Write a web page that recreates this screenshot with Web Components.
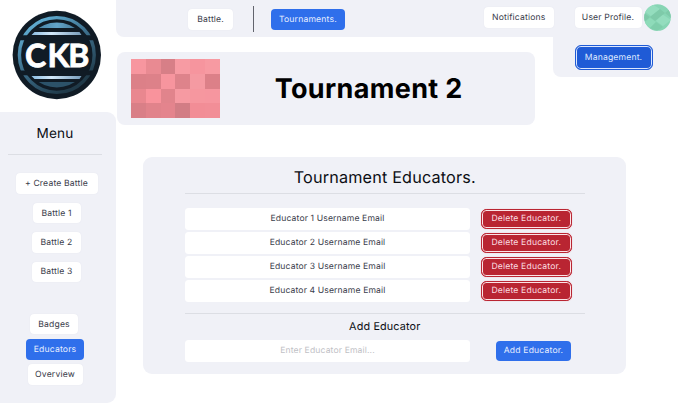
<!DOCTYPE html>
<html lang="en">
<head>
<meta charset="utf-8">
<title>Tournament Educators</title>
<style>
body{margin:0;background:#fff;font-family:Inter,"Liberation Sans",sans-serif;overflow:hidden;text-rendering:geometricPrecision}
</style>
</head>
<body>
<ckb-app></ckb-app>
<script>
class Base extends HTMLElement {
  constructor(){ super(); this.attachShadow({mode:'open'}); }
  connectedCallback(){ this.shadowRoot.innerHTML = this.render(); }
}

class CkbButton extends Base {
  render(){
    return `<style>
      :host{display:block;box-sizing:border-box;flex:none;width:var(--w,60px);height:var(--h,20.5px)}
      .b{box-sizing:border-box;width:100%;height:100%;padding-top:var(--pt,1px);border-radius:4px;display:flex;align-items:center;justify-content:center;
        background:#fff;color:#3a3d4b;font-size:8.6px;line-height:12px;letter-spacing:.17px;white-space:nowrap;box-shadow:0 0 1px #dcdee8}
      :host([kind=primary]) .b{background:#2f6feb;color:#e6eeff;box-shadow:none}
      :host([kind=focus]) .b{background:#1f5bd6;color:#dfe9ff;border:1.5px solid #1f5bd6;border-radius:6px;box-shadow:inset 0 0 0 1px #dce7ff}
      :host([kind=danger]) .b{background:#b92532;color:#fbdde0;border:1.3px solid #b92532;border-radius:5.5px;box-shadow:inset 0 0 0 1px #fbe3e6,0 0 1px #e99aa2}
    </style><div class="b"><span><slot></slot></span></div>`;
  }
}
customElements.define('ckb-button', CkbButton);

class CkbLogo extends Base {
  render(){
    return `<style>:host{display:block;width:116px;height:112px}svg{display:block}</style>
    <svg width="116" height="112" viewBox="0 0 116 112">
      <defs>
        <linearGradient id="r" x1="0" y1="0" x2=".6" y2="1"><stop offset="0" stop-color="#6cc2ea"/><stop offset=".5" stop-color="#3f7391"/><stop offset="1" stop-color="#203a49"/></linearGradient>
        <linearGradient id="t" x1="0" y1="0" x2="1" y2="0"><stop offset="0" stop-color="#356c8d"/><stop offset=".5" stop-color="#63a5ca"/><stop offset="1" stop-color="#305a75"/></linearGradient>
        <linearGradient id="l" x1="0" y1="0" x2="1" y2="0"><stop offset="0" stop-color="#8abbe0"/><stop offset=".4" stop-color="#d3e9fa"/><stop offset="1" stop-color="#779cba"/></linearGradient>
        <clipPath id="c"><circle cx="56.8" cy="55" r="32.5"/></clipPath>
      </defs>
      <circle cx="56.8" cy="55" r="44.2" fill="#101b25"/>
      <circle cx="56.8" cy="55" r="37.4" fill="none" stroke="url(#r)" stroke-width="3.4"/>
      <g clip-path="url(#c)">
        <path d="M24 22h66v6H24z" fill="url(#t)"/>
        <path d="M24 82h66v8H24z" fill="#2c5269"/>
      </g>
      <path d="M20 35.3h74v5H17zM17 70.5h79L94 75.3H20z" fill="#101b25"/>
      <path d="M34.5 32h45l2 3h-50zM31.5 76h50l-2 3h-45z" fill="url(#l)"/>
      <text x="25 47.4 68.3" y="67.4" font-family="Lato,sans-serif" font-weight="700" font-size="32" fill="#fff" stroke="#fff" stroke-width=".8">CKB</text>
    </svg>`;
  }
}
customElements.define('ckb-logo', CkbLogo);

class CkbAvatar extends Base {
  render(){
    return `<style>:host{display:block;flex:none;width:27px;height:27px}svg{display:block}</style>
    <svg width="27" height="27" viewBox="0 0 27 27"><defs><clipPath id="a"><circle cx="13.5" cy="13.5" r="13.3"/></clipPath></defs>
    <g clip-path="url(#a)"><path fill="#87d5b4" d="M0 0h27v27H0z"/>
      <path fill="#94ddbe" d="M8 0l8 5-9 7-7-5zM18 10l9 6-8 6-7-5z"/>
      <path fill="#7ecaa9" d="M16 5l5 4-10 8-5-4zM0 9l6 4-6 5zM21 9l6-5v10z"/>
      <path fill="#8edbb9" d="M6 14l6 4-6 6-6-5z"/><path fill="#7fceab" d="M12 18l7 5-6 4-7-3z"/></g></svg>`;
  }
}
customElements.define('ckb-avatar', CkbAvatar);

class CkbMosaic extends Base {
  render(){
    const cells = ['f7969f','e98a92','d77f87','f79ba3','f6959e','f79aa2',
                   'dc8088','dd8189','f7959e','de838b','f59aa2','dc8088',
                   'e9878f','f9939c','e1848c','f69aa2','f6979f','f6969f',
                   'd97f87','e1838b','e4848d','d27d85','f28d96','f28e97'];
    return `<style>:host{display:grid;flex:none;width:88.7px;height:59px;grid-template:repeat(4,1fr)/repeat(6,1fr);background:#ec8c95}</style>`
      + cells.map(c=>`<i style="background:#${c}"></i>`).join('');
  }
}
customElements.define('ckb-mosaic', CkbMosaic);

class CkbSidebar extends Base {
  render(){
    return `<style>
      :host{display:flex;flex-direction:column;align-items:center;box-sizing:border-box;width:116px;height:291px;padding:12px 6px 0 0;background:#f0f1f7;border-radius:0 9px 9px 0}
      h2{margin:0;font-size:13.6px;line-height:20px;font-weight:400;letter-spacing:.2px;color:#0c0e14}
      hr{width:94px;height:1px;margin:10px 0 18px;border:0;background:#dcdee4}
      .g{display:flex;flex-direction:column;align-items:center;gap:8.9px;padding-left:3px}
      .v{gap:4.6px;margin-top:31.8px;padding:0}
      .v ckb-button:first-child{margin-right:2px}
    </style>
    <h2>Menu</h2><hr>
    <div class="g">
      <ckb-button style="--w:82px;--h:21px">+ Create Battle</ckb-button>
      <ckb-button style="--w:48px">Battle 1</ckb-button>
      <ckb-button style="--w:49px">Battle 2</ckb-button>
      <ckb-button style="--w:49px">Battle 3</ckb-button>
    </div>
    <div class="g v">
      <ckb-button style="--w:48px">Badges</ckb-button>
      <ckb-button kind="primary" style="--w:58px">Educators</ckb-button>
      <ckb-button style="--w:55px">Overview</ckb-button>
    </div>`;
  }
}
customElements.define('ckb-sidebar', CkbSidebar);

class CkbTopbar extends Base {
  render(){
    return `<style>
      :host{display:block;height:52px}
      nav{display:flex;height:37px;box-sizing:border-box;padding:1px 7.5px 0 72.4px;align-items:center;background:#f0f1f7;border-radius:0 0 0 8px}
      .d{width:1px;height:26px;margin:0 17px 0 20px;background:#62646d}
      .m{display:flex;justify-content:flex-start;box-sizing:border-box;width:125.5px;height:40px;margin-left:auto;padding:7.5px 0 0 22px;background:#f0f1f7;border-radius:0 0 0 8px}
      .r{display:flex;align-items:center;height:33px;align-self:flex-start;margin-left:auto}
    </style>
    <nav>
      <ckb-button style="--w:44.5px;--h:21px">Battle.</ckb-button><span class="d"></span>
      <ckb-button kind="primary" style="--w:74px;--h:21px">Tournaments.</ckb-button>
      <div class="r">
        <ckb-button style="--w:69.5px;--pt:0">Notifications</ckb-button>
        <ckb-button style="--w:67px;--pt:0;margin:0 2px 0 21px">User Profile.</ckb-button>
        <ckb-avatar></ckb-avatar>
      </div>
    </nav>
    <div class="m"><ckb-button kind="focus" style="--w:78px;--h:25px">Management.</ckb-button></div>`;
  }
}
customElements.define('ckb-topbar', CkbTopbar);

class CkbBanner extends Base {
  render(){
    return `<style>
      :host{display:flex;align-items:center;box-sizing:border-box;width:418.5px;height:73px;margin-left:.5px;padding-left:14.5px;background:#f0f1f7;border-radius:8px}
      h1{margin:0 0 0 55px;font-size:27px;line-height:32px;font-weight:700;letter-spacing:.35px;color:#000;white-space:nowrap}
    </style><ckb-mosaic></ckb-mosaic><h1><slot></slot></h1>`;
  }
}
customElements.define('ckb-banner', CkbBanner);

class CkbField extends Base {
  render(){
    return `<style>
      :host{display:flex;align-items:center;justify-content:center;box-sizing:border-box;width:285px;height:21.4px;padding-top:1px;background:#fff;border-radius:3.5px;color:#3a3d4b;font-size:8.6px;line-height:12px;letter-spacing:.13px}
      :host([placeholder]){color:#bfc1c6}
    </style><span><slot></slot></span>`;
  }
}
customElements.define('ckb-field', CkbField);

class CkbEducators extends Base {
  render(){
    const rows=[1,2,3,4].map(n=>`<div class="row"><ckb-field>Educator ${n} Username Email</ckb-field><ckb-button kind="danger">Delete Educator.</ckb-button></div>`).join('');
    return `<style>
      :host{display:block;box-sizing:border-box;width:483px;height:217px;margin:32px 0 0 27px;padding:9px 41.5px 0 42px;background:#f0f1f7;border-radius:9px}
      h2,h3{margin:0;text-align:center;font-weight:400;color:#0c0e14}
      h2{font-size:16.2px;line-height:22px;letter-spacing:.18px}
      h3{font-size:10.8px;line-height:16px;letter-spacing:.15px;padding-top:5px}
      hr{height:1px;margin:5px 0 14.3px;border:0;background:#dcdee4}
      .row{display:flex;align-items:center;height:21.2px;margin-bottom:2.8px}
      .row ckb-button{--w:90.5px;--h:20px;margin-left:11px}
      .row ckb-button[kind=primary]{--w:75px;margin-left:26px}
      .s{margin:11.1px 0 0}
      .add{margin-top:5.7px}
    </style>
    <h2>Tournament Educators.</h2><hr>${rows}
    <hr class="s"><h3>Add Educator</h3>
    <div class="row add"><ckb-field placeholder>Enter Educator Email...</ckb-field><ckb-button kind="primary">Add Educator.</ckb-button></div>`;
  }
}
customElements.define('ckb-educators', CkbEducators);

class CkbApp extends Base {
  render(){
    return `<style>:host{display:grid;grid-template-columns:116px 562px;width:678px;height:415px}</style>
    <aside><ckb-logo></ckb-logo><ckb-sidebar></ckb-sidebar></aside>
    <main><ckb-topbar></ckb-topbar><ckb-banner>Tournament 2</ckb-banner><ckb-educators></ckb-educators></main>`;
  }
}
customElements.define('ckb-app', CkbApp);
</script>
</body>
</html>
